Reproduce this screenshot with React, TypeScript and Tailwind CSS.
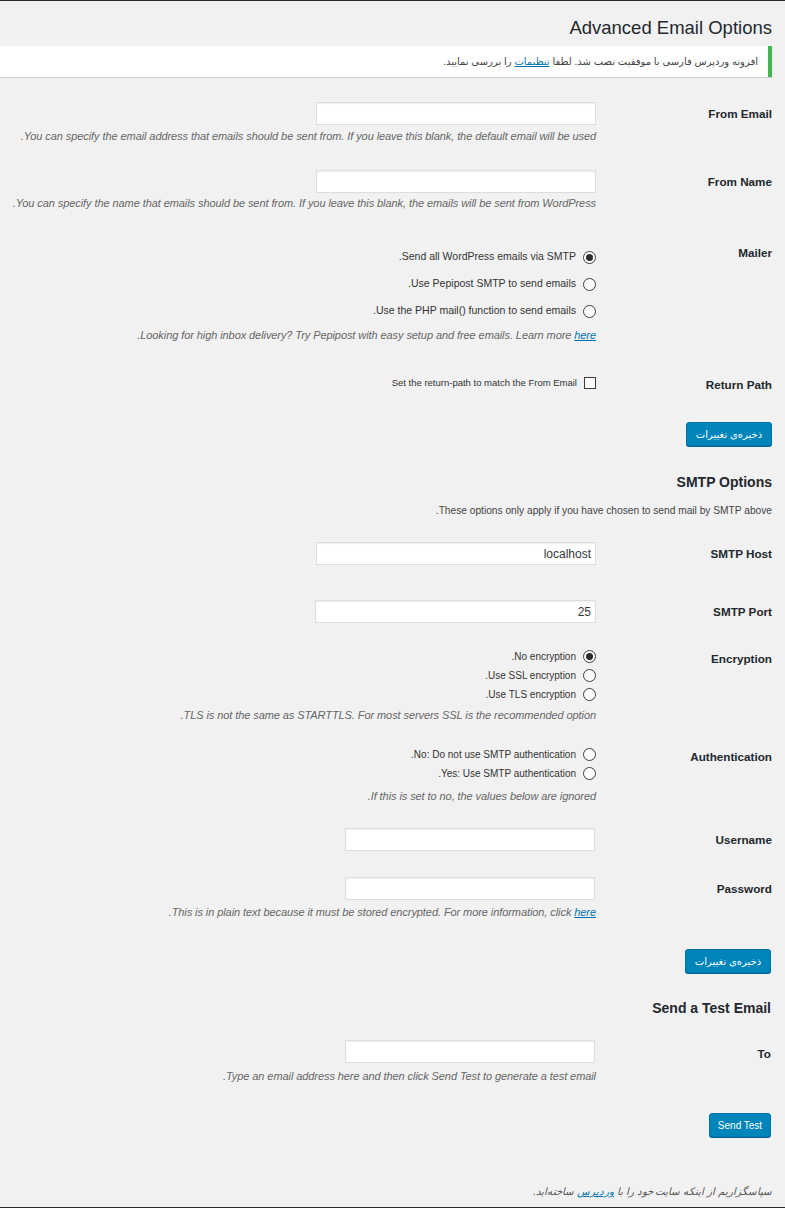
import type { ReactNode } from "react";

const FONT = "font-['Liberation_Sans','DejaVu_Sans',sans-serif]";

function Label({ children, className = "" }: { children: ReactNode; className?: string }) {
  return (
    <div className={`w-[176px] shrink-0 text-right text-[11.7px] font-bold text-[#23282d] ${className}`}>
      {children}
    </div>
  );
}

function TextInput({ value = "", width = "w-[280px]" }: { value?: string; width?: string }) {
  return (
    <div
      className={`${width} flex h-[23px] items-center border border-[#dddddd] bg-white px-[4px] text-[12px] text-[#32373c] shadow-[inset_0_1px_2px_rgba(0,0,0,0.07)]`}
    >
      {value}
    </div>
  );
}

function Desc({ children, className = "" }: { children: ReactNode; className?: string }) {
  return (
    <p className={`text-[11px] leading-[16px] italic tracking-[-0.08px] text-[#666666] ${className}`}>
      {children}
    </p>
  );
}

function Radio({ checked = false, children, small = false }: { checked?: boolean; children: ReactNode; small?: boolean }) {
  return (
    <div className="flex h-[16px] items-center gap-[7px]">
      <span className="flex h-[13px] w-[13px] shrink-0 items-center justify-center rounded-full border border-[#3c3c3c] bg-white">
        {checked && <span className="h-[7px] w-[7px] rounded-full bg-[#2b2b2b]" />}
      </span>
      <span className={`${small ? "text-[10px]" : "text-[10.5px]"} text-[#333333]`}>{children}</span>
    </div>
  );
}

function SaveButton({ children, className = "" }: { children: ReactNode; className?: string }) {
  return (
    <button
      className={`h-[24px] rounded-[3px] border border-[#0073aa] bg-[#0085ba] text-[10px] text-white shadow-[0_1px_0_#006799] ${className}`}
    >
      {children}
    </button>
  );
}

export default function App() {
  return (
    <div dir="rtl" className={`min-h-screen bg-[#f1f1f1] ${FONT}`}>
      <div className="h-px bg-[#23282d]" />
      <div className="pr-[13px]">
        <h1 className="mt-[15px] text-[18.5px] leading-[24px] font-normal text-[#23282d]">Advanced Email Options</h1>

        <div className="mt-[6px] h-[31px] border-r-4 border-[#46b450] bg-white pr-[10px] text-[10px] leading-[32px] text-[#444444] shadow-[0_1px_1px_rgba(0,0,0,0.12)]">
          افزونه وردپرس فارسی با موفقیت نصب شد. لطفا{" "}
          <a href="#" className="text-[#0073aa] underline">
            تنظیمات
          </a>{" "}
          را بررسی نمایید.
        </div>

        {/* From Email */}
        <div className="mt-[25px] flex">
          <Label className="leading-[24px]">From Email</Label>
          <div className="flex-1">
            <TextInput />
            <Desc className="mt-[3px]">
              You can specify the email address that emails should be sent from. If you leave this blank, the default
              email will be used.
            </Desc>
          </div>
        </div>

        {/* From Name */}
        <div className="mt-[26px] flex">
          <Label className="leading-[24px]">From Name</Label>
          <div className="flex-1">
            <TextInput />
            <Desc className="mt-[2px]">
              You can specify the name that emails should be sent from. If you leave this blank, the emails will be sent
              from WordPress.
            </Desc>
          </div>
        </div>

        {/* Mailer */}
        <div className="mt-[34px] flex">
          <Label className="leading-[16px]">Mailer</Label>
          <div className="flex-1 pt-[4px]">
            <div className="flex flex-col gap-[11px]">
              <Radio checked>Send all WordPress emails via SMTP.</Radio>
              <Radio>Use Pepipost SMTP to send emails.</Radio>
              <Radio>Use the PHP mail() function to send emails.</Radio>
            </div>
            <Desc className="mt-[8px]">
              Looking for high inbox delivery? Try Pepipost with easy setup and free emails. Learn more{" "}
              <a href="#" className="text-[#0073aa] underline">
                here
              </a>
              .
            </Desc>
          </div>
        </div>

        {/* Return Path */}
        <div className="mt-[34px] flex">
          <Label className="leading-[16px]">Return Path</Label>
          <div className="flex h-[12px] flex-1 items-center gap-[7px]">
            <span className="h-[12px] w-[12px] shrink-0 border border-[#3c3c3c] bg-white" />
            <span className="text-[9.5px] text-[#333333]">Set the return-path to match the From Email</span>
          </div>
        </div>

        <div className="mt-[29px] flex">
          <SaveButton className="w-[86px]">ذخیره‌ی تغییرات</SaveButton>
        </div>

        <h2 className="mt-[26px] text-[14px] leading-[20px] font-bold text-[#23282d]">SMTP Options</h2>
        <p className="mt-[11px] text-[10.2px] leading-[16px] text-[#444444]">
          These options only apply if you have chosen to send mail by SMTP above.
        </p>

        {/* SMTP Host */}
        <div className="mt-[23px] flex">
          <Label className="leading-[23px]">SMTP Host</Label>
          <div className="flex-1">
            <TextInput value="localhost" />
          </div>
        </div>

        {/* SMTP Port */}
        <div className="mt-[35px] flex">
          <Label className="leading-[23px]">SMTP Port</Label>
          <div className="flex-1">
            <TextInput value="25" width="w-[281px]" />
          </div>
        </div>

        {/* Encryption */}
        <div className="mt-[25px] flex">
          <Label className="pt-[3px] leading-[16px]">Encryption</Label>
          <div className="flex-1">
            <div className="flex flex-col gap-[3px]">
              <Radio checked small>
                No encryption.
              </Radio>
              <Radio small>Use SSL encryption.</Radio>
              <Radio small>Use TLS encryption.</Radio>
            </div>
            <Desc className="mt-[5px]">TLS is not the same as STARTTLS. For most servers SSL is the recommended option.</Desc>
          </div>
        </div>

        {/* Authentication */}
        <div className="mt-[23px] flex">
          <Label className="pt-[3px] leading-[16px]">Authentication</Label>
          <div className="flex-1">
            <div className="flex flex-col gap-[3px]">
              <Radio small>No: Do not use SMTP authentication.</Radio>
              <Radio small>Yes: Use SMTP authentication.</Radio>
            </div>
            <Desc className="mt-[7px]">If this is set to no, the values below are ignored.</Desc>
          </div>
        </div>

        {/* Username */}
        <div className="mt-[24px] flex">
          <Label className="leading-[23px]">Username</Label>
          <div className="flex-1 pr-px">
            <TextInput width="w-[250px]" />
          </div>
        </div>

        {/* Password */}
        <div className="mt-[26px] flex">
          <Label className="leading-[23px]">Password</Label>
          <div className="flex-1">
            <div className="pr-px">
              <TextInput width="w-[250px]" />
            </div>
            <Desc className="mt-[4px]">
              This is in plain text because it must be stored encrypted. For more information, click{" "}
              <a href="#" className="text-[#0073aa] underline">
                here
              </a>
              .
            </Desc>
          </div>
        </div>

        <div className="mt-[29px] flex pr-px">
          <SaveButton className="w-[86px]">ذخیره‌ی تغییرات</SaveButton>
        </div>

        <h2 className="mt-[25px] pr-px text-[14px] leading-[20px] font-bold text-[#23282d]">Send a Test Email</h2>

        {/* To */}
        <div className="mt-[22px] flex">
          <Label className="pt-[2px] pr-px leading-[23px]">To</Label>
          <div className="flex-1">
            <div className="pr-px">
              <TextInput width="w-[250px]" />
            </div>
            <Desc className="mt-[5px]">Type an email address here and then click Send Test to generate a test email.</Desc>
          </div>
        </div>

        <div className="mt-[29px] flex pr-px">
          <SaveButton className="w-[62px]">Send Test</SaveButton>
        </div>

        <p className="mt-[47px] text-[10.3px] leading-[16px] italic text-[#555555]">
          سپاسگزاریم از اینکه سایت خود را با{" "}
          <a href="#" className="text-[#0073aa] underline">
            وردپرس
          </a>{" "}
          ساخته‌اید.
        </p>
      </div>
      <div className="mt-[7px] h-[2px] bg-[#23282d]" />
    </div>
  );
}
